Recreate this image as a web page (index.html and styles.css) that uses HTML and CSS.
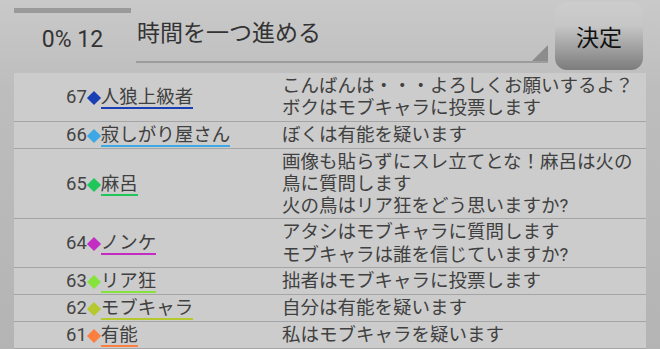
FILE: index.html
```html
<!DOCTYPE html>
<html lang="ja">
<head>
<meta charset="utf-8">
<title>進行</title>
<link rel="stylesheet" href="styles.css">
</head>
<body>
<header class="top">
  <div class="status">
    <div class="progress"></div>
    <div class="count">0% 12</div>
  </div>
  <div class="select">
    <span class="select-text">時間を一つ進める</span>
    <span class="select-arrow"></span>
  </div>
  <button class="submit">決定</button>
</header>
<ul class="log">
  <li class="row">
    <div class="who"><div class="tag"><span class="num">67</span><span class="dia c1"></span><span class="name c1">人狼上級者</span></div></div>
    <div class="msg">こんばんは・・・よろしくお願いするよ？<br>ボクはモブキャラに投票します</div>
  </li>
  <li class="row">
    <div class="who"><div class="tag"><span class="num">66</span><span class="dia c2"></span><span class="name c2">寂しがり屋さん</span></div></div>
    <div class="msg">ぼくは有能を疑います</div>
  </li>
  <li class="row">
    <div class="who"><div class="tag"><span class="num">65</span><span class="dia c3"></span><span class="name c3">麻呂</span></div></div>
    <div class="msg">画像も貼らずにスレ立てとな！麻呂は火の<br>鳥に質問します<br>火の鳥はリア狂をどう思いますか?</div>
  </li>
  <li class="row">
    <div class="who"><div class="tag"><span class="num">64</span><span class="dia c4"></span><span class="name c4">ノンケ</span></div></div>
    <div class="msg">アタシはモブキャラに質問します<br>モブキャラは誰を信じていますか?</div>
  </li>
  <li class="row">
    <div class="who"><div class="tag"><span class="num">63</span><span class="dia c5"></span><span class="name c5">リア狂</span></div></div>
    <div class="msg">拙者はモブキャラに投票します</div>
  </li>
  <li class="row">
    <div class="who"><div class="tag"><span class="num">62</span><span class="dia c6"></span><span class="name c6">モブキャラ</span></div></div>
    <div class="msg">自分は有能を疑います</div>
  </li>
  <li class="row">
    <div class="who"><div class="tag"><span class="num">61</span><span class="dia c7"></span><span class="name c7">有能</span></div></div>
    <div class="msg">私はモブキャラを疑います</div>
  </li>
</ul>
</body>
</html>
```
FILE: styles.css
```css
html, body {
  margin: 0;
  padding: 0;
}
body {
  width: 660px;
  height: 349px;
  overflow: hidden;
  background: linear-gradient(to bottom, #c9c9c9 0px, #bdbdbd 90px, #b4b4b4 349px);
  font-family: Roboto, "Noto Sans CJK JP", sans-serif;
  color: #404040;
}

.top {
  display: flex;
  align-items: flex-start;
  height: 73px;
  padding-left: 14px;
  box-sizing: border-box;
}
.status {
  width: 117px;
  display: flex;
  flex-direction: column;
  align-items: center;
}
.progress {
  width: 117px;
  height: 5px;
  margin-top: 8px;
  background: #9a9a9a;
}
.count {
  margin-top: 13px;
  font-size: 23px;
  line-height: 27px;
  color: #333;
}
.select {
  position: relative;
  margin-left: 5px;
  width: 412px;
  height: 63px;
  box-sizing: border-box;
  border-bottom: 2px solid #9c9c9c;
  padding-top: 19px;
}
.select-text {
  display: block;
  font-size: 23px;
  line-height: 30px;
  color: #333;
  padding-left: 1px;
}
.select-arrow {
  position: absolute;
  right: 0;
  bottom: 0;
  width: 0;
  height: 0;
  border-style: solid;
  border-width: 0 0 16px 16px;
  border-color: transparent transparent #8c8c8c transparent;
}
.submit {
  margin: 2px 0 0 7px;
  width: 88px;
  height: 68px;
  border: none;
  border-radius: 12px;
  padding: 0;
  background: linear-gradient(to bottom, #cdcdcd 0%, #c6c6c6 35%, #7c7c7c 100%);
  font-family: "Noto Sans CJK JP", sans-serif;
  font-size: 23px;
  color: #111;
}

.log {
  list-style: none;
  margin: 0 0 0 14px;
  padding: 0;
  width: 632px;
  background: #cccccc;
  height: 276px;
}
.row {
  display: flex;
  padding: 2px 0 1px;
  border-bottom: 1px solid #a5a5a5;
}
.who {
  width: 268px;
  flex: none;
  box-sizing: border-box;
  padding-left: 52px;
  display: flex;
  align-items: center;
}
.tag {
  display: flex;
  align-items: baseline;
  font-size: 18.5px;
  line-height: 20px;
  padding-top: 1px;
}
.num {
  color: #444;
}
.dia {
  width: 10px;
  height: 10px;
  margin: 0 2px 2.5px;
  transform: rotate(45deg);
}
.name {
  color: #404040;
  border-bottom: 2px solid;
}
.msg {
  font-size: 18.5px;
  line-height: 22.3px;
  color: #404040;
}

.dia.c1 { background: #1a3fb5; }
.name.c1 { border-color: #1a3fb5; }
.dia.c2 { background: #3ca9e6; }
.name.c2 { border-color: #3ca9e6; }
.dia.c3 { background: #1fc65a; }
.name.c3 { border-color: #1fc65a; }
.dia.c4 { background: #c22cc2; }
.name.c4 { border-color: #c22cc2; }
.dia.c5 { background: #86e33e; }
.name.c5 { border-color: #86e33e; }
.dia.c6 { background: #b5c92e; }
.name.c6 { border-color: #b5c92e; }
.dia.c7 { background: #fd7f3f; }
.name.c7 { border-color: #fd7f3f; }
```
